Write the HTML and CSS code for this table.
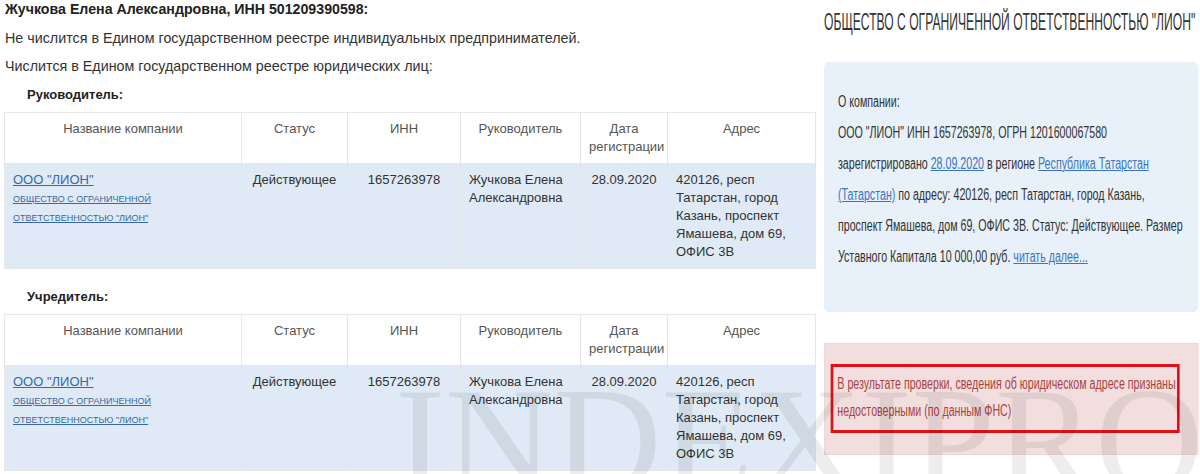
FILE: index.html
```html
<!DOCTYPE html>
<html lang="ru">
<head>
<meta charset="utf-8">
<link rel="stylesheet" href="styles.css">
</head>
<body>
<div class="page">
  <div class="left">
    <div class="title">Жучкова Елена Александровна, ИНН 501209390598:</div>
    <p class="line l1">Не числится в Едином государственном реестре индивидуальных предпринимателей.</p>
    <p class="line l2">Числится в Едином государственном реестре юридических лиц:</p>

    <div class="sub s1">Руководитель:</div>
    <table class="grid">
      <colgroup><col class="c1"><col class="c2"><col class="c3"><col class="c4"><col class="c5"><col class="c6"></colgroup>
      <tr class="head">
        <th>Название компании</th><th>Статус</th><th>ИНН</th><th>Руководитель</th><th>Дата<br>регистрации</th><th>Адрес</th>
      </tr>
      <tr class="row">
        <td><a class="name" href="#">ООО "ЛИОН"</a><br><a class="full" href="#">ОБЩЕСТВО С ОГРАНИЧЕННОЙ<br>ОТВЕТСТВЕННОСТЬЮ "ЛИОН"</a></td>
        <td class="ctr">Действующее</td>
        <td class="ctr">1657263978</td>
        <td>Жучкова Елена Александровна</td>
        <td class="ctr">28.09.2020</td>
        <td>420126, респ Татарстан, город Казань, проспект Ямашева, дом 69, ОФИС 3В</td>
      </tr>
    </table>

    <div class="sub s2">Учредитель:</div>
    <table class="grid">
      <colgroup><col class="c1"><col class="c2"><col class="c3"><col class="c4"><col class="c5"><col class="c6"></colgroup>
      <tr class="head">
        <th>Название компании</th><th>Статус</th><th>ИНН</th><th>Руководитель</th><th>Дата<br>регистрации</th><th>Адрес</th>
      </tr>
      <tr class="row">
        <td><a class="name" href="#">ООО "ЛИОН"</a><br><a class="full" href="#">ОБЩЕСТВО С ОГРАНИЧЕННОЙ<br>ОТВЕТСТВЕННОСТЬЮ "ЛИОН"</a></td>
        <td class="ctr">Действующее</td>
        <td class="ctr">1657263978</td>
        <td>Жучкова Елена Александровна</td>
        <td class="ctr">28.09.2020</td>
        <td>420126, респ Татарстан, город Казань, проспект Ямашева, дом 69, ОФИС 3В</td>
      </tr>
    </table>
  </div>

  <div class="right">
    <div class="org-wrap">
      <h1 class="org">ОБЩЕСТВО С ОГРАНИЧЕННОЙ ОТВЕТСТВЕННОСТЬЮ "ЛИОН"</h1>
    </div>
    <div class="narrow">
      <div class="about">
        О компании:<br>
        ООО "ЛИОН" ИНН 1657263978, ОГРН 1201600067580<br>зарегистрировано <a href="#">28.09.2020</a> в регионе <a href="#">Республика Татарстан<br>(Татарстан)</a> по адресу: 420126, респ Татарстан, город Казань,<br>проспект Ямашева, дом 69, ОФИС 3В. Статус: Действующее. Размер<br>Уставного Капитала 10 000,00 руб. <a href="#">читать далее...</a>
      </div>
      <div class="alert">
        <div class="alert-box">В результате проверки, сведения об юридическом адресе признаны<br>недостоверными (по данным ФНС)</div>
      </div>
    </div>
  </div>
</div>
<div class="watermark" aria-hidden="true">INDEXIPRO</div>
</body>
</html>
```

FILE: styles.css
```css
html, body {
  margin: 0;
  padding: 0;
  background: #fff;
  width: 1200px;
  height: 474px;
  overflow: hidden;
}
body {
  font-family: "Liberation Sans", Arial, sans-serif;
  color: #333;
  position: relative;
}
.page {
  display: flex;
  gap: 9px;
  padding-left: 4px;
}
.left {
  width: 811px;
  flex: none;
}
.title {
  font-weight: bold;
  font-size: 14.2px;
  line-height: 18px;
  color: #222;
  padding-left: 1px;
}
.line {
  margin: 0;
  font-size: 14.3px;
  line-height: 18px;
  padding-left: 1px;
}
.l1 { margin-top: 11px; }
.l2 { margin-top: 10px; }
.sub {
  font-weight: bold;
  font-size: 13px;
  line-height: 18px;
  color: #222;
  padding-left: 23px;
  margin-bottom: 8px;
}
.s1 { margin-top: 11px; }
.s2 { margin-top: 19px; }
.grid {
  width: 811px;
  border-collapse: collapse;
  table-layout: fixed;
  font-size: 13px;
  line-height: 18px;
}
.c1 { width: 237px; }
.c2 { width: 106px; }
.c3 { width: 113px; }
.c4 { width: 120px; }
.c5 { width: 87px; }
.c6 { width: 148px; }
.grid th, .grid td {
  border: 1px solid #e6e6e6;
  padding: 7px 8px 7px 8px;
  vertical-align: top;
}
.grid th {
  font-weight: normal;
  color: #555;
  text-align: center;
  height: 36px;
}
.grid tr.head { background: #fff; }
.grid tr.row { background: #dfeaf6; }
.grid td {
  color: #333;
  height: 90px;
}
.grid td.ctr { text-align: center; }
.grid a.name {
  color: #3869a2;
  font-size: 13px;
}
.grid a.full {
  color: #3869a2;
  font-size: 9px;
}
.right {
  width: 374px;
  flex: none;
}
.org-wrap {
  width: 374px;
  height: 36px;
  overflow: visible;
}
.org {
  margin: 0;
  width: 740px;
  transform: scaleX(0.505);
  transform-origin: 0 0;
  font-weight: normal;
  font-size: 24px;
  line-height: 28px;
  color: #333;
  padding-top: 8px;
  white-space: nowrap;
}
.narrow {
  width: 562px;
  margin-top: 26px;
  transform: scaleX(0.666);
  transform-origin: 0 0;
}
.about {
  background: #e8f0f9;
  border-radius: 7px;
  padding: 24px 10px 40px 21px;
  font-size: 16px;
  line-height: 31px;
  color: #333;
  white-space: nowrap;
}
.about a { color: #3a76c0; }
.alert {
  margin-top: 31px;
  background: #f2dede;
  border: 1px solid #ecd6d6;
  padding: 20px 27px 21px 9px;
}
.alert-box {
  border: 3px solid #e0101a;
  border-left-width: 4.5px;
  border-right-width: 4.5px;
  color: #a94442;
  font-size: 16px;
  line-height: 27px;
  padding: 3px 3px 6px 6px;
  white-space: nowrap;
}
.watermark {
  position: absolute;
  left: 395px;
  top: 365px;
  width: 805px;
  height: 109px;
  overflow: hidden;
  font-family: "Liberation Serif", "Times New Roman", serif;
  font-size: 150px;
  line-height: 150px;
  color: rgba(0, 0, 0, 0.07);
  white-space: nowrap;
  pointer-events: none;
}
```
